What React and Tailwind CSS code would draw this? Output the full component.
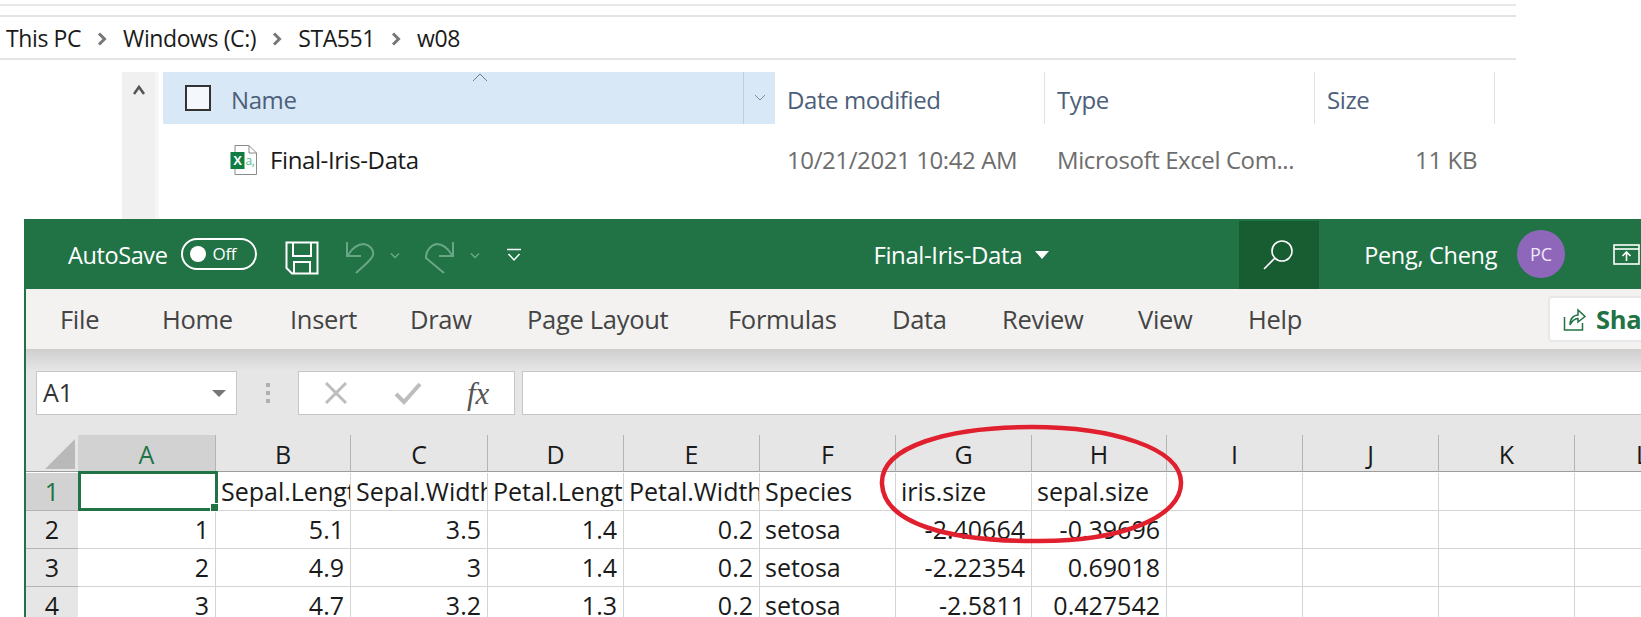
import React from 'react';

const columnas = ['A', 'B', 'C', 'D', 'E', 'F', 'G', 'H', 'I', 'J', 'K', 'L'];

const filas = [
  ['1', '', 'Sepal.Length', 'Sepal.Width', 'Petal.Length', 'Petal.Width', 'Species', 'iris.size', 'sepal.size', '', '', '', ''],
  ['2', '1', '5.1', '3.5', '1.4', '0.2', 'setosa', '-2.40664', '-0.39696', '', '', '', ''],
  ['3', '2', '4.9', '3', '1.4', '0.2', 'setosa', '-2.22354', '0.69018', '', '', '', ''],
  ['4', '3', '4.7', '3.2', '1.3', '0.2', 'setosa', '-2.5811', '0.427542', '', '', '', ''],
];

const pestanas = [
  { nombre: 'File', ancho: 'w-[102px]' },
  { nombre: 'Home', ancho: 'w-[128px]' },
  { nombre: 'Insert', ancho: 'w-[120px]' },
  { nombre: 'Draw', ancho: 'w-[117px]' },
  { nombre: 'Page Layout', ancho: 'w-[201px]' },
  { nombre: 'Formulas', ancho: 'w-[164px]' },
  { nombre: 'Data', ancho: 'w-[110px]' },
  { nombre: 'Review', ancho: 'w-[136px]' },
  { nombre: 'View', ancho: 'w-[110px]' },
  { nombre: 'Help', ancho: 'w-[100px]' },
];

const esTexto = (v) => isNaN(Number(v));

const Flecha = () => (
  <svg width="10" height="14" viewBox="0 0 10 14" className="mx-[16px] mt-[2px] shrink-0">
    <path d="M2 1.5L7.5 7L2 12.5" fill="none" stroke="#777" strokeWidth="3" />
  </svg>
);

const IconoExcel = () => (
  <svg width="28" height="32" viewBox="0 0 28 32" className="shrink-0">
    <path d="M5 1.5H19L26.5 9V30.5H5Z" fill="#fff" stroke="#8a8a8a" strokeWidth="1" />
    <path d="M19 1.5V9H26.5" fill="none" stroke="#8a8a8a" strokeWidth="1" />
    <rect x="0.5" y="8" width="14" height="17" fill="#107c41" />
    <text x="7.5" y="21" textAnchor="middle" fontSize="13" fontWeight="700" fill="#fff" fontFamily="Liberation Sans, sans-serif">X</text>
    <text x="15.5" y="21" fontSize="12" fill="#4fc08d" fontFamily="Open Sans, sans-serif">a,</text>
  </svg>
);

const Explorador = () => (
  <div className="h-[219px] shrink-0 font-['Open_Sans',sans-serif]">
    <div className="w-[1516px] h-[17px] pt-[4px] border-b-2 border-[#e4e4e4]">
      <div className="h-[2px] bg-[#e8e8e8]" />
    </div>
    <div className="w-[1516px] h-[43px] flex items-center pl-[6px] pt-[1px] border-b-2 border-[#e4e4e4] text-[23px] tracking-[-0.4px] text-[#1a1a1a]">
      <span>This PC</span>
      <Flecha />
      <span>Windows (C:)</span>
      <Flecha />
      <span>STA551</span>
      <Flecha />
      <span>w08</span>
    </div>
    <div className="flex ml-[122px] mt-[12px] h-[147px]">
      <div className="w-[33px] bg-[#f0f0f0] flex justify-center pt-[12px]">
        <svg width="14" height="12" viewBox="0 0 14 12">
          <path d="M2 10L7 3L12 10" fill="none" stroke="#555" strokeWidth="2.5" />
        </svg>
      </div>
      <div className="w-[4px] bg-[#f6f6f6] mr-[4px]" />
      <div className="flex-1">
        <div className="flex h-[52px] text-[#4c607a] text-[24px] tracking-[-0.4px]">
          <div className="relative w-[612px] bg-[#d9e8f6] flex items-center pl-[22px]">
            <div className="w-[26px] h-[26px] border-2 border-[#333] bg-[#f4f8fc]" />
            <span className="ml-[20px] mt-[3px]">Name</span>
            <svg width="16" height="9" viewBox="0 0 16 9" className="absolute left-[309px] top-[1px]">
              <path d="M1 8L8 1L15 8" fill="none" stroke="#6f7c8a" strokeWidth="1" />
            </svg>
            <div className="ml-auto w-[32px] h-full border-l border-[#bcd0e2] flex items-center justify-center">
              <svg width="12" height="8" viewBox="0 0 12 8">
                <path d="M1 1L6 6L11 1" fill="none" stroke="#7b8c9c" strokeWidth="1" />
              </svg>
            </div>
          </div>
          <div className="w-[270px] pl-[12px] pt-[3px] flex items-center border-r border-[#e2e2e2]">Date modified</div>
          <div className="w-[270px] pl-[12px] pt-[3px] flex items-center border-r border-[#e2e2e2]">Type</div>
          <div className="w-[180px] pl-[12px] pt-[3px] flex items-center border-r border-[#e2e2e2]">Size</div>
        </div>
        <div className="flex h-[72px] items-center text-[24px] tracking-[-0.4px] text-[#6d6d6d]">
          <div className="w-[612px] flex items-center pl-[67px]">
            <IconoExcel />
            <span className="ml-[12px] text-[#1a1a1a]">Final-Iris-Data</span>
          </div>
          <div className="w-[270px] pl-[12px] whitespace-nowrap">10/21/2021 10:42 AM</div>
          <div className="w-[270px] pl-[12px] whitespace-nowrap">Microsoft Excel Com...</div>
          <div className="w-[162px] text-right">11 KB</div>
        </div>
      </div>
    </div>
  </div>
);

const BarraTitulo = () => (
  <div className="h-[70px] bg-[#217346] flex items-center text-white font-['Open_Sans',sans-serif] shrink-0 -ml-[2px] overflow-hidden">
    <span className="ml-[44px] mt-[4px] shrink-0 text-[23.5px] tracking-[-0.4px]">AutoSave</span>
    <div className="ml-[14px] shrink-0 w-[76px] h-[32px] rounded-full border-2 border-white flex items-center pl-[7px]">
      <div className="w-[16px] h-[16px] rounded-full bg-white" />
      <span className="ml-[6px] text-[17px] tracking-[-0.3px]">Off</span>
    </div>
    <svg width="34" height="34" viewBox="0 0 34 34" className="ml-[28px] mt-[8px] shrink-0" fill="none" stroke="#fff" strokeWidth="2">
      <path d="M1.5 1.5H32.5V32.5H7L1.5 27Z" />
      <path d="M8 1.5V15H26V1.5" />
      <path d="M9 32.5V21H25V32.5" />
    </svg>
    <svg width="30" height="34" viewBox="0 0 30 34" className="ml-[26px] mt-[8px] shrink-0" fill="none" stroke="#6aa686" strokeWidth="2">
      <path d="M2 1V15H16" />
      <path d="M3 14C8 6 13 3 19 3C25 4 29 9 28 14C27 19 18 25 11 32" />
    </svg>
    <svg width="12" height="8" viewBox="0 0 12 8" className="ml-[14px] mt-[3px] shrink-0" fill="none" stroke="#6aa686" strokeWidth="1.5">
      <path d="M2 1.5L6 5.5L10 1.5" />
    </svg>
    <svg width="30" height="34" viewBox="0 0 30 34" className="ml-[24px] mt-[8px] shrink-0" fill="none" stroke="#6aa686" strokeWidth="2">
      <path d="M28 1V15H14" />
      <path d="M27 14C22 6 17 3 12 3C6 4 1 9 1 17L19 32" />
    </svg>
    <svg width="12" height="8" viewBox="0 0 12 8" className="ml-[14px] mt-[3px] shrink-0" fill="none" stroke="#6aa686" strokeWidth="1.5">
      <path d="M2 1.5L6 5.5L10 1.5" />
    </svg>
    <svg width="16" height="14" viewBox="0 0 16 14" className="ml-[25px] mt-[2px] shrink-0" fill="none" stroke="#fff" strokeWidth="1.5">
      <path d="M1 1.5H15" />
      <path d="M2.5 6L8 12L13.5 6" />
    </svg>
    <div className="ml-[351px] mt-[2px] shrink-0 flex items-center text-[24px] tracking-[-0.4px]">
      <span>Final-Iris-Data</span>
      <svg width="16" height="9" viewBox="0 0 16 9" className="ml-[12px] shrink-0"><path d="M1 0H15L8 8Z" fill="#fff" /></svg>
    </div>
    <div className="ml-[189px] shrink-0 w-[80px] h-[68px] mt-[2px] bg-[#185c32] flex items-center justify-center">
      <svg width="32" height="32" viewBox="0 0 32 32" fill="none" stroke="#fff" strokeWidth="1.6">
        <circle cx="19" cy="12" r="10" />
        <path d="M12 19L1 30" />
      </svg>
    </div>
    <span className="ml-[45px] mt-[4px] shrink-0 text-[23.5px] tracking-[-0.3px] whitespace-nowrap">Peng, Cheng</span>
    <div className="ml-[20px] w-[48px] h-[48px] shrink-0 rounded-full bg-[#8e67bb] flex items-center justify-center text-[18px] text-[#f0e8f8]">PC</div>
    <svg width="27" height="21" viewBox="0 0 27 21" className="ml-[48px] shrink-0" fill="none" stroke="#fff" strokeWidth="1.6">
      <rect x="1" y="1" width="25" height="19" />
      <path d="M1 5H26" />
      <path d="M13.5 17V8M9.5 12L13.5 8L17.5 12" />
    </svg>
  </div>
);

const Pestanas = () => (
  <div className="relative z-10 h-[60px] bg-[#f3f2f1] flex items-center shrink-0 pl-[34px] text-[#444] text-[25.5px] tracking-[-0.3px] font-['Open_Sans',sans-serif]">
    {pestanas.map((p) => (
      <div key={p.nombre} className={`${p.ancho} shrink-0 whitespace-nowrap`}>{p.nombre}</div>
    ))}
    <div className="ml-[200px] shrink-0 w-[120px] h-[46px] bg-white border-2 border-[#e8e8e8] rounded-[4px] flex items-center pl-[13px] overflow-hidden">
      <svg width="24" height="24" viewBox="0 0 24 24" fill="none" stroke="#217346" strokeWidth="1.5" className="shrink-0">
        <path d="M1.5 10V23H19.5V16" />
        <path d="M7 18C7 11 11 8 15 8V3L22 9.5L15 15V11.5C11 11.5 9 14 7 18Z" />
      </svg>
      <span className="ml-[9px] text-[#217346] font-bold text-[25.5px]">Share</span>
    </div>
  </div>
);

const BarraFormula = () => (
  <div className="h-[86px] shrink-0 bg-gradient-to-b from-[#cfcfcf] from-0% via-[#e6e6e6] via-25% to-[#e6e6e6] pt-[22px] font-['Open_Sans',sans-serif]">
    <div className="flex h-[44px] pl-[10px]">
      <div className="w-[201px] bg-white border border-[#c6c6c6] flex items-center pl-[6px] text-[25px] text-[#333]">
        <span>A1</span>
        <svg width="14" height="7" viewBox="0 0 14 7" className="ml-auto mr-[10px]"><path d="M0 0H14L7 7Z" fill="#777" /></svg>
      </div>
      <div className="w-[61px] flex flex-col items-center justify-center gap-[4px]">
        <div className="w-[4px] h-[4px] bg-[#b0b0b0]" />
        <div className="w-[4px] h-[4px] bg-[#b0b0b0]" />
        <div className="w-[4px] h-[4px] bg-[#b0b0b0]" />
      </div>
      <div className="w-[217px] bg-white border border-[#c6c6c6] flex items-center pl-[25px]">
        <svg width="24" height="24" viewBox="0 0 24 24" fill="none" stroke="#bdbdbd" strokeWidth="3"><path d="M2 2L22 22M22 2L2 22" /></svg>
        <svg width="28" height="24" viewBox="0 0 28 24" fill="none" stroke="#bdbdbd" strokeWidth="4" className="ml-[46px]"><path d="M2 13L10 21L26 3" /></svg>
        <span className="ml-[45px] font-['Liberation_Serif',serif] italic text-[31px] leading-none text-[#555]">fx</span>
      </div>
      <div className="ml-[7px] flex-1 bg-white border border-r-0 border-[#c6c6c6]" />
    </div>
  </div>
);

const Hoja = () => (
  <div className="relative flex-1 font-['Open_Sans',sans-serif] text-[25px] text-[#1a1a1a]">
    <div className="grid grid-cols-[52px_138px_135px_137px_136px_136px_136px_136px_135px_136px_136px_136px_136px] auto-rows-[38px]">
      <div className="h-[37px] bg-[#e6e6e6] border-b border-[#9c9c9c] flex justify-end items-start pr-[2px] pt-[3px]">
        <svg width="31" height="31" viewBox="0 0 31 31"><path d="M30 1V31H0Z" fill="#b9b9b9" /></svg>
      </div>
      {columnas.map((c) => (
        <div
          key={c}
          className={`h-[37px] pt-[3px] flex items-center justify-center border-b border-r border-b-[#9c9c9c] border-r-[#b4b4b4] ${c === 'A' ? 'bg-[#d2d2d2] text-[#217346]' : 'bg-[#e6e6e6]'}`}
        >
          {c}
        </div>
      ))}
      {filas.map((fila) =>
        fila.map((valor, i) =>
          i === 0 ? (
            <div
              key={`h${fila[0]}`}
              className={`flex items-center justify-center border-b border-[#b4b4b4] ${valor === '1' ? 'bg-[#d2d2d2] text-[#217346]' : 'bg-[#e6e6e6]'}`}
            >
              {valor}
            </div>
          ) : (
            <div
              key={`${fila[0]}-${i}`}
              className={`flex items-center overflow-hidden whitespace-nowrap border-r border-b border-[#d4d4d4] bg-white ${esTexto(valor) ? 'justify-start pl-[5px]' : 'justify-end pr-[6px]'}`}
            >
              {valor}
            </div>
          )
        )
      )}
    </div>
    {/* celda seleccionada */}
    <div className="absolute left-[52px] top-[36px] w-[140px] h-[40px] border-[3px] border-[#217346]">
      <div className="absolute -right-[4px] -bottom-[4px] w-[9px] h-[9px] bg-[#217346] border border-white" />
    </div>
    {/* circulo rojo encima */}
    <svg className="absolute left-[850px] top-[-11px]" width="310" height="122" viewBox="0 0 310 122" fill="none">
      <path d="M156 3C236 3 304 24 305 58C306 92 248 118 158 117C74 117 8 100 6 60C4 22 74 3 156 3Z" stroke="#e0202e" strokeWidth="4.5" />
    </svg>
  </div>
);

export default function App() {
  return (
    <div className="relative w-[1641px] h-[617px] overflow-hidden bg-white flex flex-col">
      <Explorador />
      <div className="ml-[24px] w-[1617px] flex-1 flex flex-col border-l-2 border-[#217346] overflow-hidden">
        <BarraTitulo />
        <Pestanas />
        <BarraFormula />
        <Hoja />
      </div>
    </div>
  );
}
